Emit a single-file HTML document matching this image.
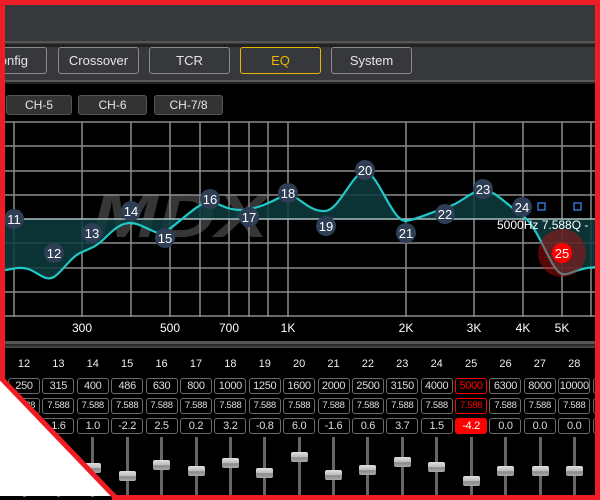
<!DOCTYPE html>
<html><head><meta charset="utf-8"><style>
*{margin:0;padding:0;box-sizing:border-box}
body{width:600px;height:500px;overflow:hidden;background:#000;position:relative;font-family:"Liberation Sans",sans-serif;color:#ddd}
.abs{position:absolute}
.btn{position:absolute;top:47px;height:27px;border:1px solid #8a8a8a;border-radius:3px;font-size:13px;color:#e6e6e6;text-align:center;line-height:25px}
.ch{position:absolute;top:95px;height:20px;border:1px solid #555;border-radius:3px;background:#333;font-size:12px;color:#e6e6e6;text-align:center;line-height:18px}
.row{position:absolute;left:8px;display:flex;white-space:nowrap}
.row div{flex:none;width:32px;margin-right:2.4px;height:16px;border:1px solid #6a6a6a;border-radius:3px;font-size:11px;text-align:center;line-height:14px;color:#ddd;letter-spacing:-0.3px}
.row.q div{font-size:9.5px}
.row .sel{border-color:#f00;color:#f00}
.row .selg{background:#f00;border-color:#f00;color:#fff}
.nums{position:absolute;left:8px;top:358px;display:flex}
.nums div{width:32px;margin-right:2.4px;text-align:center;font-size:11px;color:#eee}
.trk{position:absolute;top:437px;width:3px;height:60px;background:#666}
.knob{position:absolute;width:17px;height:10px;border-radius:2px;background:linear-gradient(#e0e0e0,#bbb 50%,#888 55%,#aaa)}
</style></head><body>
<div class="abs" style="left:0;top:0;width:600px;height:44px;background:#36383c"></div>
<div class="abs" style="left:0;top:44px;width:600px;height:3px;background:#222"></div>
<div class="abs" style="left:0;top:47px;width:600px;height:33px;background:#36383c"></div>
<div class="abs" style="left:0;top:41px;width:600px;height:2px;background:#555"></div>
<div class="abs" style="left:0;top:80px;width:600px;height:2px;background:#5a5a5a"></div>
<div class="abs" style="left:0;top:82px;width:600px;height:2px;background:#222"></div>
<div class="btn" style="left:-30px;width:77px;text-align:right;padding-right:18px">Config</div>
<div class="btn" style="left:58px;width:81px">Crossover</div>
<div class="btn" style="left:149px;width:81px">TCR</div>
<div class="btn" style="left:240px;width:81px;border-color:#e6b800;color:#f0b400">EQ</div>
<div class="btn" style="left:331px;width:81px">System</div>
<div class="ch" style="left:6px;width:66px">CH-5</div>
<div class="ch" style="left:78px;width:69px">CH-6</div>
<div class="ch" style="left:154px;width:69px">CH-7/8</div>

<svg class="abs" style="left:0;top:0" width="600" height="500">
<g stroke="#8c8c8c" stroke-width="1.5">
<line x1="0" y1="122" x2="600" y2="122"/><line x1="0" y1="146" x2="600" y2="146"/><line x1="0" y1="171" x2="600" y2="171"/><line x1="0" y1="195" x2="600" y2="195"/><line x1="0" y1="243" x2="600" y2="243"/><line x1="0" y1="268" x2="600" y2="268"/><line x1="0" y1="292" x2="600" y2="292"/><line x1="0" y1="316" x2="600" y2="316"/>
<line x1="14" y1="122" x2="14" y2="317"/><line x1="82" y1="122" x2="82" y2="317"/><line x1="131" y1="122" x2="131" y2="317"/><line x1="170" y1="122" x2="170" y2="317"/><line x1="200" y1="122" x2="200" y2="317"/><line x1="229" y1="122" x2="229" y2="317"/><line x1="249" y1="122" x2="249" y2="317"/><line x1="268" y1="122" x2="268" y2="317"/><line x1="288" y1="122" x2="288" y2="317"/><line x1="406" y1="122" x2="406" y2="317"/><line x1="474" y1="122" x2="474" y2="317"/><line x1="523" y1="122" x2="523" y2="317"/><line x1="562" y1="122" x2="562" y2="317"/><line x1="591" y1="122" x2="591" y2="317"/>
</g>
<text x="92" y="237" font-size="62" font-weight="bold" font-style="italic" fill="#888" fill-opacity="0.4" font-family="Liberation Sans" textLength="176" lengthAdjust="spacingAndGlyphs">MDX</text>
<path d="M0,219 L0,271 C10,270 18,266 28,269 C38,272 45,282 54,277 C62,272 70,258 80,253 C88,249 95,248 105,238 C115,228 122,223 130,223 C140,223 152,232 161,234 C175,228 195,204 210,201 C222,205 228,210 240,210 C255,210 270,203 288,193 C300,198 310,212 325,211 C340,210 352,172 365,172 C378,172 392,222 406,221 C418,219 432,212 445,208 C462,203 472,190 483,190 C495,190 508,206 522,215 C540,228 550,270 562,274 C570,276 576,267 600,267 L600,219 Z" fill="#0d3b3d" fill-opacity="0.85" stroke="none"/>
<line x1="0" y1="219" x2="600" y2="219" stroke="#a8c0c0" stroke-width="1.5"/>
<path d="M0,271 C10,270 18,266 28,269 C38,272 45,282 54,277 C62,272 70,258 80,253 C88,249 95,248 105,238 C115,228 122,223 130,223 C140,223 152,232 161,234 C175,228 195,204 210,201 C222,205 228,210 240,210 C255,210 270,203 288,193 C300,198 310,212 325,211 C340,210 352,172 365,172 C378,172 392,222 406,221 C418,219 432,212 445,208 C462,203 472,190 483,190 C495,190 508,206 522,215 C540,228 550,270 562,274 C570,276 576,267 600,267" fill="none" stroke="#20c8c8" stroke-width="2.2"/>
<circle cx="562" cy="253" r="24" fill="#c01010" fill-opacity="0.45"/>
<g font-size="13" fill="#fff" text-anchor="middle" font-family="Liberation Sans">
<circle cx="14" cy="219" r="10" fill="#2d3e55"/><text x="14" y="224">11</text>
<circle cx="54" cy="253" r="10" fill="#2d3e55"/><text x="54" y="258">12</text>
<circle cx="92" cy="233" r="10" fill="#2d3e55"/><text x="92" y="238">13</text>
<circle cx="131" cy="211" r="10" fill="#2d3e55"/><text x="131" y="216">14</text>
<circle cx="165" cy="238" r="10" fill="#2d3e55"/><text x="165" y="243">15</text>
<circle cx="210" cy="199" r="10" fill="#2d3e55"/><text x="210" y="204">16</text>
<circle cx="249" cy="217" r="10" fill="#2d3e55"/><text x="249" y="222">17</text>
<circle cx="288" cy="193" r="10" fill="#2d3e55"/><text x="288" y="198">18</text>
<circle cx="326" cy="226" r="10" fill="#2d3e55"/><text x="326" y="231">19</text>
<circle cx="365" cy="170" r="10" fill="#2d3e55"/><text x="365" y="175">20</text>
<circle cx="406" cy="233" r="10" fill="#2d3e55"/><text x="406" y="238">21</text>
<circle cx="445" cy="214" r="10" fill="#2d3e55"/><text x="445" y="219">22</text>
<circle cx="483" cy="189" r="10" fill="#2d3e55"/><text x="483" y="194">23</text>
<circle cx="522" cy="207" r="10" fill="#2d3e55"/><text x="522" y="212">24</text>
<circle cx="562" cy="253" r="10" fill="#ff0000"/><text x="562" y="258">25</text>
</g>
<rect x="538" y="203" width="7" height="7" fill="none" stroke="#3a8cff" stroke-width="1.2"/>
<rect x="574" y="203" width="7" height="7" fill="none" stroke="#3a8cff" stroke-width="1.2"/>
<text x="497" y="229" font-size="12" fill="#fff" font-family="Liberation Sans">5000Hz 7.588Q -</text>
<g font-size="12" fill="#fff" text-anchor="middle" font-family="Liberation Sans">
<text x="82" y="332">300</text><text x="170" y="332">500</text><text x="229" y="332">700</text><text x="288" y="332">1K</text><text x="406" y="332">2K</text><text x="474" y="332">3K</text><text x="523" y="332">4K</text><text x="562" y="332">5K</text>
</g>
<rect x="0" y="341" width="600" height="3" fill="#555"/>
<rect x="0" y="344" width="600" height="2" fill="#2a2a2a"/>
<rect x="0" y="346" width="600" height="2" fill="#444"/>
</svg>

<div class="nums"><div>12</div><div>13</div><div>14</div><div>15</div><div>16</div><div>17</div><div>18</div><div>19</div><div>20</div><div>21</div><div>22</div><div>23</div><div>24</div><div>25</div><div>26</div><div>27</div><div>28</div></div>
<div class="row" style="top:378px"><div>250</div><div>315</div><div>400</div><div>486</div><div>630</div><div>800</div><div>1000</div><div>1250</div><div>1600</div><div>2000</div><div>2500</div><div>3150</div><div>4000</div><div class="sel">5000</div><div>6300</div><div>8000</div><div>10000</div><div>12500</div></div>
<div class="row q" style="top:398px"><div>7.588</div><div>7.588</div><div>7.588</div><div>7.588</div><div>7.588</div><div>7.588</div><div>7.588</div><div>7.588</div><div>7.588</div><div>7.588</div><div>7.588</div><div>7.588</div><div>7.588</div><div class="sel">7.588</div><div>7.588</div><div>7.588</div><div>7.588</div><div>7.588</div></div>
<div class="row" style="top:418px"><div>0.0</div><div>1.6</div><div>1.0</div><div>-2.2</div><div>2.5</div><div>0.2</div><div>3.2</div><div>-0.8</div><div>6.0</div><div>-1.6</div><div>0.6</div><div>3.7</div><div>1.5</div><div class="selg">-4.2</div><div>0.0</div><div>0.0</div><div>0.0</div><div>0.0</div></div>

<div class="trk" style="left:23px"></div><div class="trk" style="left:57px"></div><div class="trk" style="left:91px"></div><div class="trk" style="left:126px"></div><div class="trk" style="left:160px"></div><div class="trk" style="left:195px"></div><div class="trk" style="left:229px"></div><div class="trk" style="left:263px"></div><div class="trk" style="left:298px"></div><div class="trk" style="left:332px"></div><div class="trk" style="left:366px"></div><div class="trk" style="left:401px"></div><div class="trk" style="left:435px"></div><div class="trk" style="left:470px"></div><div class="trk" style="left:504px"></div><div class="trk" style="left:539px"></div><div class="trk" style="left:573px"></div>
<div class="knob" style="left:16px;top:465px"></div><div class="knob" style="left:50px;top:461px"></div><div class="knob" style="left:84px;top:463px"></div><div class="knob" style="left:119px;top:471px"></div><div class="knob" style="left:153px;top:460px"></div><div class="knob" style="left:188px;top:466px"></div><div class="knob" style="left:222px;top:458px"></div><div class="knob" style="left:256px;top:468px"></div><div class="knob" style="left:291px;top:452px"></div><div class="knob" style="left:325px;top:470px"></div><div class="knob" style="left:359px;top:465px"></div><div class="knob" style="left:394px;top:457px"></div><div class="knob" style="left:428px;top:462px"></div><div class="knob" style="left:463px;top:476px"></div><div class="knob" style="left:497px;top:466px"></div><div class="knob" style="left:532px;top:466px"></div><div class="knob" style="left:566px;top:466px"></div>

<svg class="abs" style="left:0;top:0" width="600" height="500">
<polygon points="0,378 114,496 0,496" fill="#fff"/>
<line x1="-1" y1="376" x2="115" y2="497" stroke="#ee1c25" stroke-width="5"/>
<rect x="0" y="0" width="600" height="5" fill="#ee1c25"/>
<rect x="0" y="0" width="5" height="378" fill="#ee1c25"/>
<rect x="595" y="0" width="5" height="500" fill="#ee1c25"/>
<rect x="112" y="495" width="488" height="5" fill="#ee1c25"/>
</svg>
</body></html>
